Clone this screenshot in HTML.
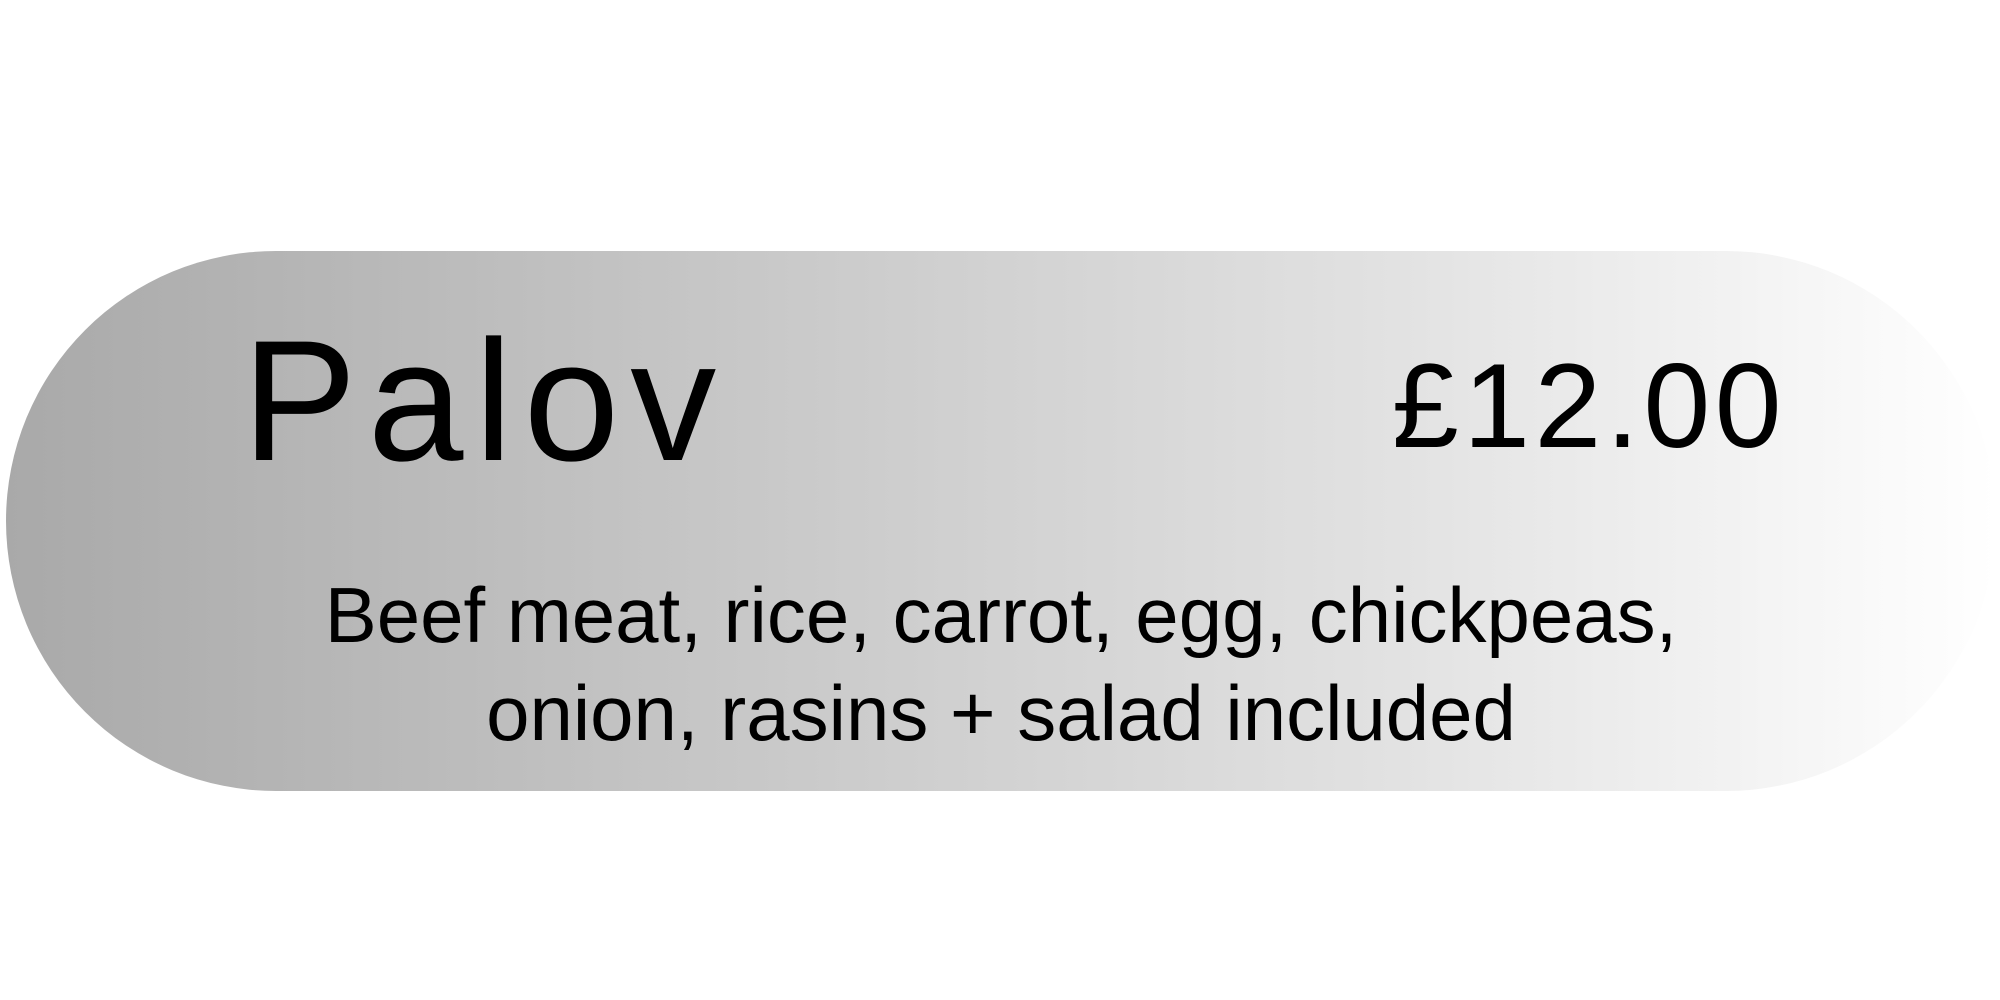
<!DOCTYPE html>
<html><head><meta charset="utf-8"><style>
html,body{margin:0;padding:0;background:#fff;width:2000px;height:1000px;overflow:hidden}
.pill{position:absolute;left:6px;top:251px;width:1990px;height:540px;border-radius:270px;background:linear-gradient(90deg,#a9a9a9 0%,#c6c6c6 35%,#e2e2e2 70%,#ffffff 100%)}
.t{position:absolute;font-family:"Liberation Sans",sans-serif;color:#000;white-space:nowrap;line-height:1}
</style></head><body>
<div class="pill"></div>
<div class="t" style="left:242px;top:315px;font-size:172px;letter-spacing:11px">Palov</div>
<div class="t" style="left:1392px;top:346px;font-size:120px;letter-spacing:4.5px">£12.00</div>
<div class="t" style="left:0;width:2002px;text-align:center;top:566px;font-size:78px;line-height:98px;white-space:normal">Beef meat, rice, carrot, egg, chickpeas,<br>onion, rasins + salad included</div>
</body></html>
